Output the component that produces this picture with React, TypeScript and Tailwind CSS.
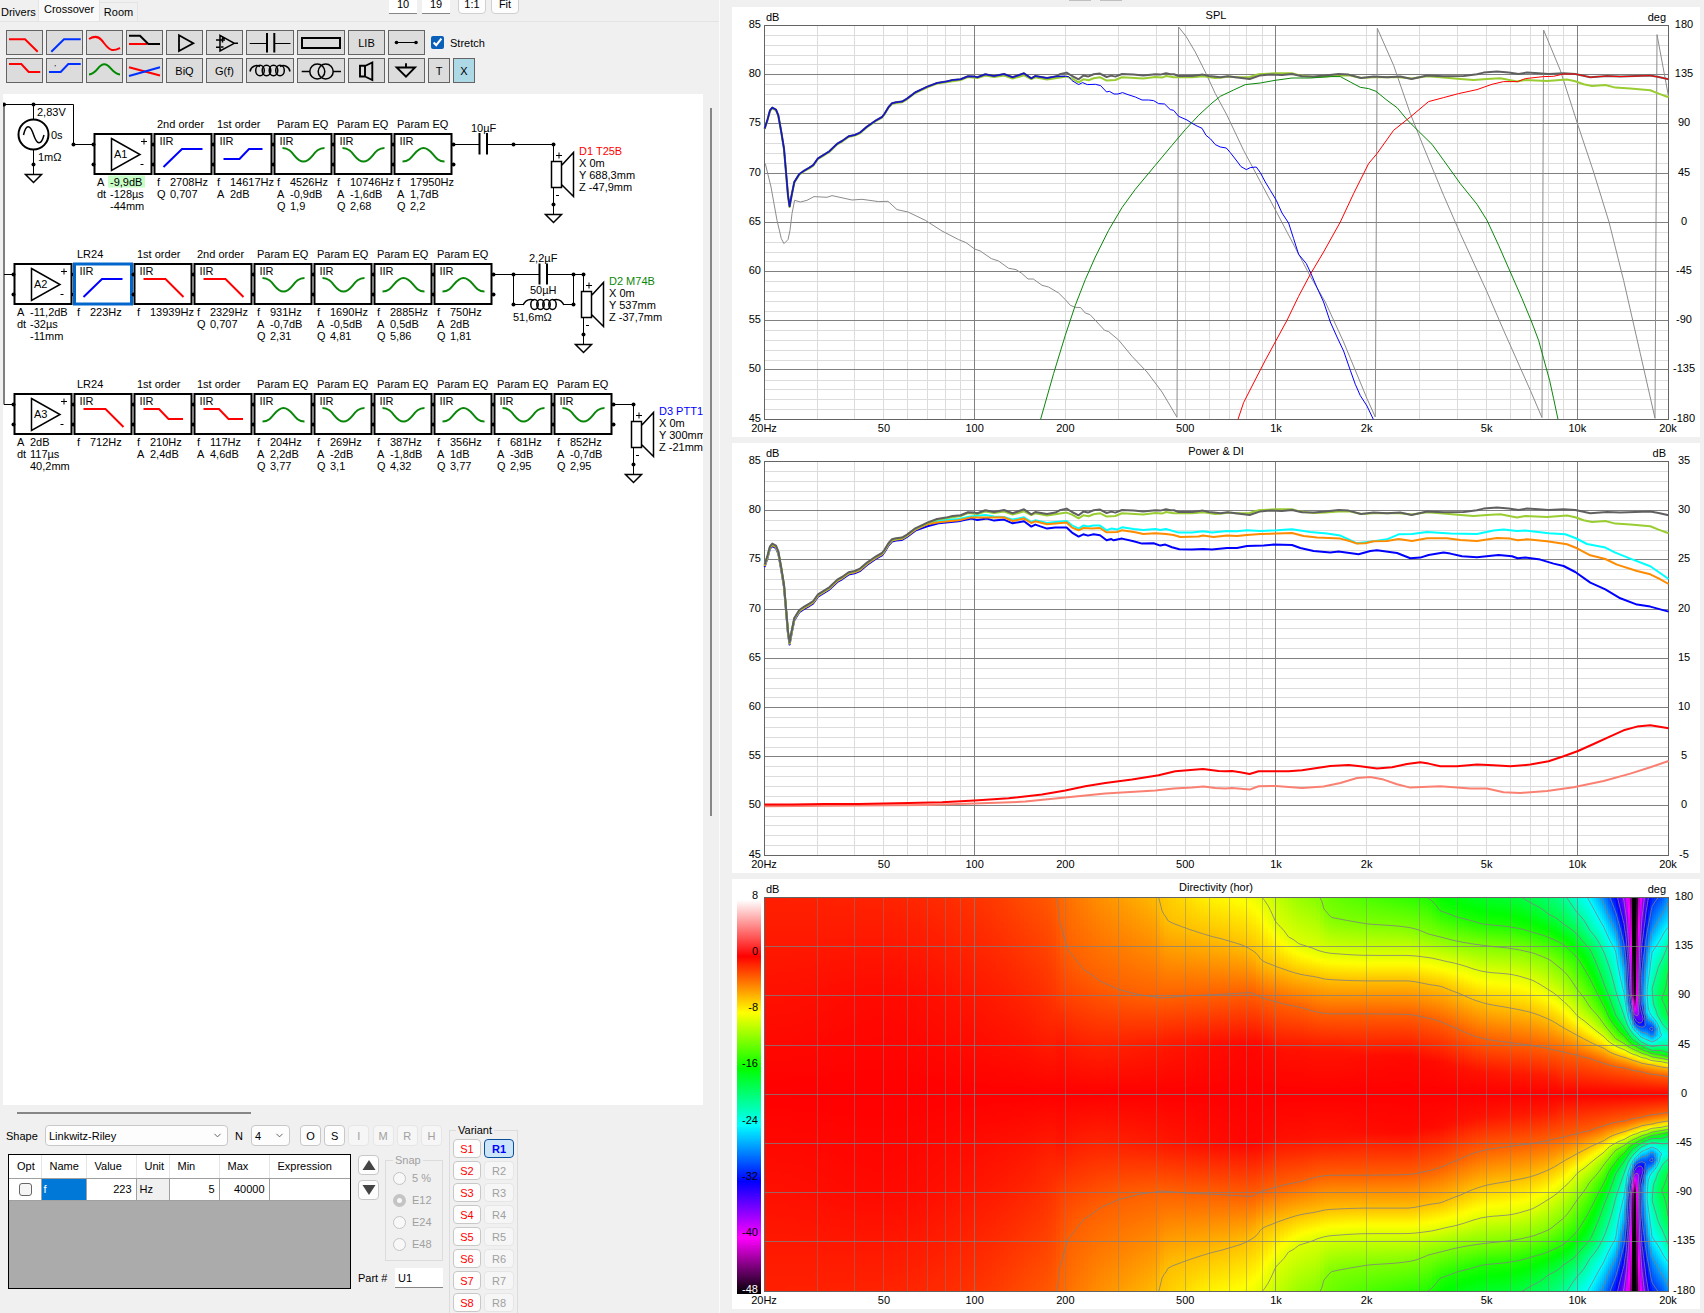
import { useState } from 'react';
import type { ReactNode } from 'react';
import clsx from 'clsx';
import { ChevronDown } from 'lucide-react';

type Point = [number, number];

/* ------------------------------------------------------------------ */
/* Toolbar                                                             */
/* ------------------------------------------------------------------ */

interface Tool {
  label: string;
  wide?: boolean;
  icon?: ReactNode;
}

const TOOLS_TOP: Tool[] = [
  { label: 'Low pass', icon: <path d="M2 8.3H18L30.7 20.7" stroke="#f00" /> },
  { label: 'High pass', icon: <path d="M4.3 20.7L17 8.3H33.7" stroke="#0030ff" /> },
  { label: 'Low pass Q', icon: <path d="M2 8C6 5.5 11 5 14.5 9S21 18.5 25 19S31 18 33 17" stroke="#f00" /> },
  {
    label: 'Shelf pair',
    icon: (
      <>
        <path d="M2 13H20" stroke="#f00" />
        <path d="M2 4.7H13L21.3 13H33" stroke="#000" />
      </>
    ),
  },
  { label: 'Amplifier', icon: <path d="M12 4.3L26.3 12.3L12 20Z" stroke="#000" strokeWidth={1.8} /> },
  {
    label: 'Op amp',
    icon: (
      <path
        d="M13 4.3L27.3 12.3L13 20ZM9 9H13M9 16.3H13M27 12.3H31M13 9H18M15.5 6.5V11.5M14 16H16.5"
        stroke="#000"
        strokeWidth={1.5}
      />
    ),
  },
  {
    label: 'Capacitor',
    wide: true,
    icon: (
      <>
        <path d="M2.7 12.5H20M27 12.5H43.5" stroke="#000" strokeWidth={1} />
        <path d="M20 2V21.5M27.3 2V21.5" stroke="#000" />
      </>
    ),
  },
  { label: 'Resistor', wide: true, icon: <rect x={4} y={7} width={38} height={10} stroke="#000" /> },
  { label: 'LIB' },
  {
    label: 'Wire',
    icon: (
      <>
        <path d="M7 11.5H27" stroke="#000" strokeWidth={1} />
        <circle cx={7.5} cy={11.5} r={1.8} fill="#000" />
        <circle cx={27} cy={11.5} r={1.8} fill="#000" />
      </>
    ),
  },
];

const TOOLS_BOTTOM: Tool[] = [
  { label: 'Low shelf', icon: <path d="M2 5H14.3L21.7 13H33.3" stroke="#f00" /> },
  {
    label: 'High shelf',
    icon: (
      <>
        <path d="M2 13H13.7L21.3 5H33.7" stroke="#0030ff" />
        <circle cx={8.3} cy={6.7} r={0.8} fill="#555" />
      </>
    ),
  },
  { label: 'Parametric EQ', icon: <path d="M2 15.5C10 15 11 5.3 17.3 5.3S25 15 33 15.5" stroke="#008a00" /> },
  {
    label: 'Crossing',
    icon: (
      <>
        <path d="M2 8.3L33 16.5" stroke="#f00" />
        <path d="M2 17L33 8.3" stroke="#0030ff" />
      </>
    ),
  },
  { label: 'BiQ' },
  { label: 'G(f)' },
  {
    label: 'Inductor',
    wide: true,
    icon: (
      <g stroke="#000" strokeWidth={1.5}>
        {[13, 19.5, 26.5, 33].map((x) => (
          <ellipse key={x} cx={x} cy={11.5} rx={4.3} ry={5.2} />
        ))}
        <path d="M3 12.5C4 7 9 5.5 13 7.5M43 12.5C42 7 37 5.5 33 7.5" />
      </g>
    ),
  },
  {
    label: 'Transformer',
    wide: true,
    icon: (
      <g stroke="#000" strokeWidth={1.5}>
        <circle cx={19.3} cy={12.5} r={7.5} />
        <circle cx={27.7} cy={12.5} r={7.5} />
        <path d="M3.7 12.5H12M35 12.5H43" />
      </g>
    ),
  },
  { label: 'Speaker', icon: <path d="M11 6.7H16V17.5H11ZM16 7L23.3 3.5V21L16 17.5" stroke="#000" strokeWidth={1.9} /> },
  { label: 'Ground', icon: <path d="M7.7 8.5H26L17 17.7ZM17 4.3V8" stroke="#000" strokeWidth={1.9} /> },
];

function ToolRow({ tools }: { tools: Tool[] }) {
  return (
    <div className="flex gap-[3px]">
      {tools.map((tool) => (
        <button
          key={tool.label}
          type="button"
          aria-label={tool.label}
          className={clsx(
            'flex h-[25px] items-center justify-center border border-[#646464] bg-[#dcdcdc]',
            tool.wide ? 'w-[48px]' : 'w-[37px]',
          )}
        >
          {tool.icon ? (
            <svg
              viewBox={tool.wide ? '0 0 46 23' : '0 0 35 23'}
              className={clsx('h-[23px] shrink-0', tool.wide ? 'w-[46px]' : 'w-[35px]')}
              fill="none"
              strokeWidth={2}
            >
              {tool.icon}
            </svg>
          ) : (
            tool.label
          )}
        </button>
      ))}
    </div>
  );
}

function Header() {
  const [stretch, setStretch] = useState(true);

  return (
    <header className="h-[94px]">
      <div className="flex h-[22px] border-b border-[#e4e4e4]">
        <nav className="flex items-end">
          <button type="button" className="h-[19px] w-[38px] pl-px text-left">Drivers</button>
          <button type="button" className="h-[21px] w-[62px] border-x border-[#e4e4e4] bg-[#f9f9f9] pb-1">
            Crossover
          </button>
          <button type="button" className="h-[19px] w-[38px] border-t border-r border-[#e4e4e4]">Room</button>
        </nav>
        <div className="ml-[251px] flex h-[14px] items-end">
          <input
            aria-label="Width"
            defaultValue="10"
            className="h-[20px] w-[28px] border-b border-[#868686] bg-white text-center"
          />
          <input
            aria-label="Height"
            defaultValue="19"
            className="ml-[5px] h-[20px] w-[28px] border-b border-[#868686] bg-white text-center"
          />
          <button type="button" className="ml-2 h-[20px] w-[28px] rounded border border-[#d0d0d0] bg-[#fdfdfd]">
            1:1
          </button>
          <button type="button" className="ml-[5px] h-[20px] w-[28px] rounded border border-[#d0d0d0] bg-[#fdfdfd]">
            Fit
          </button>
        </div>
      </div>

      <div className="flex flex-col gap-[3px] pt-2 pl-[6px]">
        <div className="flex items-center">
          <ToolRow tools={TOOLS_TOP} />
          <label className="ml-[6px] flex items-center gap-[6px]">
            <input
              type="checkbox"
              checked={stretch}
              onChange={(e) => setStretch(e.target.checked)}
              className="h-[13px] w-[13px] accent-[#0a5fb8]"
            />
            Stretch
          </label>
        </div>
        <div className="flex items-center gap-[3px]">
          <ToolRow tools={TOOLS_BOTTOM} />
          <button type="button" className="h-[25px] w-[22px] border border-[#646464] bg-[#dcdcdc]">T</button>
          <button type="button" className="h-[25px] w-[22px] border border-[#646464] bg-[#add8e6]">X</button>
        </div>
      </div>
    </header>
  );
}

/* ------------------------------------------------------------------ */
/* Schematic                                                           */
/* ------------------------------------------------------------------ */

const SHAPES = {
  highpass: { d: 'M10 22.5L28.5 4.5H49', stroke: '#00f' },
  highshelf: { d: 'M10 14.5H26L35.5 4.5H49', stroke: '#00f' },
  lowpass: { d: 'M10 4.5H32L50 22.5', stroke: '#f00' },
  lowshelf: { d: 'M10 4.5H25.5L35 14.5H49.5', stroke: '#f00' },
  dip: { d: 'M9 3.5C20 3.5 21 17 30 17S40 3.5 51 3.5', stroke: '#0a870a' },
  bump: { d: 'M9 17C20 17 21 3.5 30 3.5S40 17 51 17', stroke: '#0a870a' },
};

interface Block {
  title: string;
  shape: keyof typeof SHAPES;
  params: string[][];
  selected?: boolean;
}

interface Way {
  amp: string;
  ampParams: string[][];
  x: number;
  y: number;
  blocks: Block[];
}

const EQ = 'Param EQ';

const WAYS: Way[] = [
  {
    amp: 'A1',
    ampParams: [['A', '-9,9dB'], ['dt', '-128µs'], ['', '-44mm']],
    x: 93.5,
    y: 144.5,
    blocks: [
      { title: '2nd order', shape: 'highpass', params: [['f', '2708Hz'], ['Q', '0,707']] },
      { title: '1st order', shape: 'highshelf', params: [['f', '14617Hz'], ['A', '2dB']] },
      { title: EQ, shape: 'dip', params: [['f', '4526Hz'], ['A', '-0,9dB'], ['Q', '1,9']] },
      { title: EQ, shape: 'dip', params: [['f', '10746Hz'], ['A', '-1,6dB'], ['Q', '2,68']] },
      { title: EQ, shape: 'bump', params: [['f', '17950Hz'], ['A', '1,7dB'], ['Q', '2,2']] },
    ],
  },
  {
    amp: 'A2',
    ampParams: [['A', '-11,2dB'], ['dt', '-32µs'], ['', '-11mm']],
    x: 13.5,
    y: 274.5,
    blocks: [
      { title: 'LR24', shape: 'highpass', params: [['f', '223Hz']], selected: true },
      { title: '1st order', shape: 'lowpass', params: [['f', '13939Hz']] },
      { title: '2nd order', shape: 'lowpass', params: [['f', '2329Hz'], ['Q', '0,707']] },
      { title: EQ, shape: 'dip', params: [['f', '931Hz'], ['A', '-0,7dB'], ['Q', '2,31']] },
      { title: EQ, shape: 'dip', params: [['f', '1690Hz'], ['A', '-0,5dB'], ['Q', '4,81']] },
      { title: EQ, shape: 'bump', params: [['f', '2885Hz'], ['A', '0,5dB'], ['Q', '5,86']] },
      { title: EQ, shape: 'bump', params: [['f', '750Hz'], ['A', '2dB'], ['Q', '1,81']] },
    ],
  },
  {
    amp: 'A3',
    ampParams: [['A', '2dB'], ['dt', '117µs'], ['', '40,2mm']],
    x: 13.5,
    y: 404.5,
    blocks: [
      { title: 'LR24', shape: 'lowpass', params: [['f', '712Hz']] },
      { title: '1st order', shape: 'lowshelf', params: [['f', '210Hz'], ['A', '2,4dB']] },
      { title: '1st order', shape: 'lowshelf', params: [['f', '117Hz'], ['A', '4,6dB']] },
      { title: EQ, shape: 'bump', params: [['f', '204Hz'], ['A', '2,2dB'], ['Q', '3,77']] },
      { title: EQ, shape: 'dip', params: [['f', '269Hz'], ['A', '-2dB'], ['Q', '3,1']] },
      { title: EQ, shape: 'dip', params: [['f', '387Hz'], ['A', '-1,8dB'], ['Q', '4,32']] },
      { title: EQ, shape: 'bump', params: [['f', '356Hz'], ['A', '1dB'], ['Q', '3,77']] },
      { title: EQ, shape: 'dip', params: [['f', '681Hz'], ['A', '-3dB'], ['Q', '2,95']] },
      { title: EQ, shape: 'dip', params: [['f', '852Hz'], ['A', '-0,7dB'], ['Q', '2,95']] },
    ],
  },
];

const DRIVERS = [
  { name: 'D1 T25B', color: '#f00', x: 553.5, y: 144.5, pos: ['X 0m', 'Y 688,3mm', 'Z -47,9mm'] },
  { name: 'D2 M74B', color: '#0a870a', x: 583.5, y: 274.5, pos: ['X 0m', 'Y 537mm', 'Z -37,7mm'] },
  { name: 'D3 PTT1', color: '#00f', x: 633.5, y: 404.5, pos: ['X 0m', 'Y 300mm', 'Z -21mm'] },
];

const DOTS: Point[] = [
  [4, 104.5], [33.5, 104.5], [73.5, 144.5], [33.5, 164.5], [513.5, 144.5],
  [513.5, 274.5], [573.5, 274.5], [513.5, 304.5], [573.5, 304.5],
];

function Params({ x, y, rows }: { x: number; y: number; rows: string[][] }) {
  return (
    <>
      {rows.map(([key, value], i) => (
        <g key={i}>
          <text x={x + 3.5} y={y + 41.5 + i * 12}>{key}</text>
          <text x={x + 16.5} y={y + 41.5 + i * 12}>{value}</text>
        </g>
      ))}
    </>
  );
}

function Pins({ x, y }: { x: number; y: number }) {
  return (
    <>
      <circle cx={x} cy={y} r={2} />
      <circle cx={x} cy={y + 20} r={2} />
    </>
  );
}

function WayRow({ way }: { way: Way }) {
  const { x, y } = way;
  return (
    <g>
      <rect x={x + 1} y={y - 10.5} width={57} height={40} fill="none" stroke="#000" strokeWidth={2} />
      <path d={`M${x + 18} ${y - 6}L${x + 46.5} ${y + 10}L${x + 18} ${y + 26}Z`} fill="none" stroke="#000" strokeWidth={1.5} />
      <text x={x + 20.5} y={y + 13.5}>{way.amp}</text>
      <path d={`M${x + 47.5} ${y - 3}h6M${x + 50.5} ${y - 6}v6M${x + 47} ${y + 20}h3`} stroke="#000" />
      {way.amp === 'A1' && <rect x={x + 14.5} y={y + 31} width={37} height={12} fill="#c6ffc6" />}
      <Params x={x} y={y} rows={way.ampParams} />
      <Pins x={x} y={y} />
      {way.blocks.map((block, i) => {
        const bx = x + 60 * (i + 1);
        const shape = SHAPES[block.shape];
        return (
          <g key={i}>
            <Pins x={bx} y={y} />
            <rect
              x={bx + 1}
              y={y - 10.5}
              width={57}
              height={40}
              fill="#fff"
              stroke={block.selected ? '#0066cc' : '#000'}
              strokeWidth={block.selected ? 3 : 2}
            />
            <text x={bx + 3.5} y={y - 16.5}>{block.title}</text>
            <text x={bx + 6} y={y + 0.5}>IIR</text>
            <path d={shape.d} transform={`translate(${bx} ${y})`} fill="none" stroke={shape.stroke} strokeWidth={2} />
            <Params x={bx} y={y} rows={block.params} />
          </g>
        );
      })}
      <Pins x={x + 60 * (way.blocks.length + 1)} y={y} />
    </g>
  );
}

function Ground({ x, y }: { x: number; y: number }) {
  return <path d={`M${x - 8} ${y}h16l-8 8z`} fill="none" stroke="#000" strokeWidth={1.5} />;
}

function Schematic() {
  return (
    <svg viewBox="3 94 700 400" className="h-[400px] w-[700px]" fontSize={11}>
      {/* wires */}
      <path
        d="M4 404.5V104.5H73.5V144.5H93.5M4 274.5H13.5M4 404.5H13.5
           M33.5 104.5V119M33.5 150V174.5
           M453.5 144.5H479M487 144.5H553.5
           M493.5 274.5H539M547 274.5H583.5
           M513.5 274.5V304.5H524M573.5 274.5V304.5H563
           M613.5 404.5H633.5"
        fill="none"
        stroke="#000"
      />
      {DOTS.map(([x, y]) => (
        <circle key={`${x}-${y}`} cx={x} cy={y} r={2} />
      ))}

      {/* source */}
      <circle cx={33.5} cy={134.5} r={15} fill="none" stroke="#000" strokeWidth={2} />
      <path d="M23.5 135C26 124 30 124 33.5 134.5S41 146 44 135" fill="none" stroke="#000" strokeWidth={1.5} />
      <Ground x={33.5} y={174.5} />
      <text x={37} y={116}>2,83V</text>
      <text x={51} y={139}>0s</text>
      <text x={38} y={161}>1mΩ</text>

      {WAYS.map((way) => (
        <WayRow key={way.amp} way={way} />
      ))}

      {/* passive parts */}
      <path d="M479.5 133V154.5M487 133V154.5M539.5 263.5V284.5M547 263.5V284.5" stroke="#000" strokeWidth={2} />
      <text x={471} y={132}>10µF</text>
      <text x={529} y={262}>2,2µF</text>
      <text x={530} y={294}>50µH</text>
      <text x={513} y={321}>51,6mΩ</text>
      <g fill="none" stroke="#000" strokeWidth={1.5}>
        {[534.5, 540.5, 546.5, 552.5].map((x) => (
          <ellipse key={x} cx={x} cy={304.5} rx={3.7} ry={5} />
        ))}
        <path d="M523 305C526 299 531 299 534 300M564 305C561 299 556 299 553 300" />
      </g>

      {/* drivers */}
      {DRIVERS.map(({ name, color, x, y, pos }) => (
        <g key={name}>
          <path d={`M${x} ${y}v17M${x} ${y + 43}v27`} stroke="#000" />
          <circle cx={x} cy={y} r={2} />
          <circle cx={x} cy={y + 60} r={2} />
          <path
            d={`M${x - 2} ${y + 17}h10v26h-10zM${x + 8} ${y + 21}l12 -13v44l-12 -12`}
            fill="#fff"
            stroke="#000"
            strokeWidth={1.5}
          />
          <path d={`M${x + 2.5} ${y + 11}h6M${x + 5.5} ${y + 8}v6M${x + 2.5} ${y + 51}h3`} stroke="#000" />
          <Ground x={x} y={y + 70} />
          <text x={x + 25.5} y={y + 10.5} fill={color}>{name}</text>
          {pos.map((line, i) => (
            <text key={line} x={x + 25.5} y={y + 22.5 + i * 12}>{line}</text>
          ))}
        </g>
      ))}
    </svg>
  );
}

/* ------------------------------------------------------------------ */
/* Part editor                                                         */
/* ------------------------------------------------------------------ */

const COLUMNS = [
  { name: 'Opt', width: 'w-[32px]' },
  { name: 'Name', width: 'w-[45px]' },
  { name: 'Value', width: 'w-[50px]' },
  { name: 'Unit', width: 'w-[33px]' },
  { name: 'Min', width: 'w-[50px]' },
  { name: 'Max', width: 'w-[50px]' },
  { name: 'Expression', width: 'w-[81px]' },
];

const MODES = [
  { name: 'O', enabled: true },
  { name: 'S', enabled: true },
  { name: 'I', enabled: false },
  { name: 'M', enabled: false },
  { name: 'R', enabled: false },
  { name: 'H', enabled: false },
];

const SNAPS = ['5 %', 'E12', 'E24', 'E48'];
const VARIANTS = [1, 2, 3, 4, 5, 6, 7, 8];

function SelectBox({ id, value, width }: { id: string; value: string; width: string }) {
  return (
    <div className={clsx('flex h-[21px] items-center rounded-sm border border-[#c8c8c8] bg-[#fdfdfd] pr-1', width)}>
      <select id={id} defaultValue={value} className="min-w-0 flex-1 appearance-none bg-transparent pl-[3px] outline-none">
        <option>{value}</option>
      </select>
      <ChevronDown className="h-[11px] w-[11px] text-[#555]" strokeWidth={2} />
    </div>
  );
}

function ParamTable() {
  return (
    <div className="mt-px h-[135px] w-[343px] border border-black bg-[#ababab]">
      <table className="w-[341px] table-fixed border-collapse">
        <thead>
          <tr className="h-[23px] bg-white">
            {COLUMNS.map((col) => (
              <th
                key={col.name}
                className={clsx(
                  'border-r border-b border-r-[#e5e5e5] border-b-[#a0a0a0] p-0 pl-2 text-left font-normal last:border-r-0',
                  col.width,
                )}
              >
                {col.name}
              </th>
            ))}
          </tr>
        </thead>
        <tbody>
          <tr className="h-[22px] bg-white">
            <td className="border-r border-b border-[#a0a0a0] p-0">
              <input
                type="checkbox"
                aria-label="Optimize f"
                className="ml-[10px] block h-[13px] w-[13px] appearance-none rounded-[3px] border border-[#666] bg-[#f5f5f5] checked:bg-[#0a5fb8]"
              />
            </td>
            <td className="border-r border-b border-[#a0a0a0] bg-[#0078d7] p-0 pl-[2px] text-white">f</td>
            <td className="border-r border-b border-[#a0a0a0] p-0 pr-1 text-right">223</td>
            <td className="border-r border-b border-[#a0a0a0] bg-[#f0f0f0] p-0 pl-[3px]">Hz</td>
            <td className="border-r border-b border-[#a0a0a0] p-0 pr-1 text-right">5</td>
            <td className="border-r border-b border-[#a0a0a0] p-0 pr-1 text-right">40000</td>
            <td className="border-b border-[#a0a0a0] p-0" />
          </tr>
        </tbody>
      </table>
    </div>
  );
}

function PartEditor() {
  const [snap, setSnap] = useState('E12');
  const [variant, setVariant] = useState(1);

  return (
    <section className="h-[208px] overflow-hidden pt-[7px]">
      <div className="ml-[17px] h-[2px] w-[234px] bg-[#868686]" />
      <div className="flex pl-[6px]">
        <div className="w-[443px] pt-[11px]">
          <div className="flex items-center">
            <label htmlFor="shape" className="w-[39px]">Shape</label>
            <SelectBox id="shape" value="Linkwitz-Riley" width="w-[183px]" />
            <label htmlFor="order" className="w-[23px] pl-[7px]">N</label>
            <SelectBox id="order" value="4" width="w-[39px]" />
            <div className="ml-[10px] flex w-[142px] justify-between">
              {MODES.map((mode) => (
                <button
                  key={mode.name}
                  type="button"
                  disabled={!mode.enabled}
                  className="h-[21px] w-[21px] rounded border border-[#c8c8c8] bg-[#fdfdfd] disabled:border-[#e6e6e6] disabled:bg-[#f6f6f6] disabled:text-[#a0a0a0]"
                >
                  {mode.name}
                </button>
              ))}
            </div>
          </div>

          <div className="mt-[7px] flex pl-[2px]">
            <ParamTable />
            <div className="ml-[7px] w-[85px]">
              <div className="flex gap-[6px]">
                <div className="flex flex-col gap-[5px] pt-[2px]">
                  <button
                    type="button"
                    aria-label="Move up"
                    className="flex h-[20px] w-[21px] items-center justify-center rounded border border-[#c8c8c8] bg-[#fdfdfd]"
                  >
                    <svg viewBox="0 0 14 12" className="h-[12px] w-[14px]"><path d="M7 1L13.5 11H.5Z" fill="#444" /></svg>
                  </button>
                  <button
                    type="button"
                    aria-label="Move down"
                    className="flex h-[20px] w-[21px] items-center justify-center rounded border border-[#c8c8c8] bg-[#fdfdfd]"
                  >
                    <svg viewBox="0 0 14 12" className="h-[12px] w-[14px]"><path d="M7 11L.5 1H13.5Z" fill="#444" /></svg>
                  </button>
                </div>
                <fieldset disabled className="w-[58px] border border-[#dcdcdc] pb-[5px] pl-[7px] text-[#a0a0a0]">
                  <legend className="px-[2px] leading-[14px]">Snap</legend>
                  {SNAPS.map((s) => (
                    <label key={s} className="flex h-[22px] items-center gap-[6px]">
                      <input
                        type="radio"
                        name="snap"
                        checked={snap === s}
                        onChange={() => setSnap(s)}
                        className="h-[13px] w-[13px] appearance-none rounded-full border border-[#c4c4c4] bg-[#f8f8f8] checked:border-4"
                      />
                      {s}
                    </label>
                  ))}
                </fieldset>
              </div>
              <div className="mt-[7px] flex items-center">
                <label htmlFor="part" className="w-[37px]">Part #</label>
                <input id="part" defaultValue="U1" className="h-[20px] w-[48px] border-b border-[#868686] bg-white px-[3px]" />
              </div>
            </div>
          </div>
        </div>

        <div className="pt-[9px]">
          <fieldset className="h-[200px] w-[69px] border border-[#dcdcdc] pt-[2px] pl-[3px]">
            <legend className="ml-[3px] px-[2px] leading-[14px]">Variant</legend>
            <div className="flex flex-col gap-[3px]">
              {VARIANTS.map((n) => (
                <div key={n} className="flex gap-[3px]">
                  <button type="button" className="h-[19px] w-[28px] rounded border border-[#c8c8c8] bg-[#fdfdfd] text-[#f00]">
                    S{n}
                  </button>
                  <button
                    type="button"
                    disabled={n !== 1}
                    onClick={() => setVariant(n)}
                    className={clsx(
                      'h-[19px] w-[30px] rounded border',
                      variant === n
                        ? 'border-[#0a4f9c] bg-[#cce4f7] font-bold text-[#00f]'
                        : 'border-[#e6e6e6] bg-[#f6f6f6] text-[#a0a0a0]',
                    )}
                  >
                    R{n}
                  </button>
                </div>
              ))}
            </div>
          </fieldset>
        </div>
      </div>
    </section>
  );
}

/* ------------------------------------------------------------------ */
/* Graph frame                                                         */
/* ------------------------------------------------------------------ */

const PLOT = { left: 32, top: 18.5, width: 904, height: 394 };
const RIGHT = PLOT.left + PLOT.width;
const BOTTOM = PLOT.top + PLOT.height;

const freqX = (hz: number) => PLOT.left + (PLOT.width * Math.log10(hz / 20)) / 3;
const crisp = (v: number) => Math.floor(v) + 0.5;

const MINOR_HZ = [
  30, 40, 50, 60, 70, 80, 90, 200, 300, 400, 500, 600, 700, 800, 900,
  2000, 3000, 4000, 5000, 6000, 7000, 8000, 9000,
];
const MAJOR_HZ = [100, 1000, 10000];
const X_TICKS: [number, string][] = [
  [20, '20Hz'], [50, '50'], [100, '100'], [200, '200'], [500, '500'],
  [1000, '1k'], [2000, '2k'], [5000, '5k'], [10000, '10k'], [20000, '20k'],
];

const DB_TICKS = [85, 80, 75, 70, 65, 60, 55, 50, 45];
const DEG_TICKS = [180, 135, 90, 45, 0, -45, -90, -135, -180];
const DI_TICKS = [35, 30, 25, 20, 15, 10, 5, 0, -5];

interface GraphProps {
  title: string;
  rightUnit: string;
  leftTicks?: number[];
  rightTicks: number[];
  overlay?: boolean;
  before?: ReactNode;
  children?: ReactNode;
}

function Graph({ title, rightUnit, leftTicks, rightTicks, overlay, before, children }: GraphProps) {
  const rows = Array.from({ length: 41 }, (_, i) => i);
  const minor = overlay ? 'rgba(128,128,128,.45)' : '#dcdcdc';
  const major = overlay ? 'rgba(128,128,128,.75)' : '#808080';

  return (
    <svg viewBox="0 0 968 430" className="block w-full bg-white" fontSize={11} role="img" aria-label={title}>
      {before}
      {rows
        .filter((i) => i % 5 !== 0 && !overlay)
        .map((i) => {
          const y = crisp(PLOT.top + (i * PLOT.height) / 40);
          return <path key={i} d={`M${PLOT.left} ${y}H${RIGHT}`} stroke={minor} />;
        })}
      {MINOR_HZ.map((hz) => (
        <path key={hz} d={`M${crisp(freqX(hz))} ${PLOT.top}V${BOTTOM}`} stroke={minor} />
      ))}
      {MAJOR_HZ.map((hz) => (
        <path key={hz} d={`M${crisp(freqX(hz))} ${PLOT.top}V${BOTTOM}`} stroke={major} />
      ))}
      {rightTicks.map((tick, i) => {
        const y = crisp(PLOT.top + (i * (PLOT.height - 0.5)) / 8);
        return (
          <g key={tick}>
            <path d={`M${PLOT.left} ${y}H${RIGHT}`} stroke={major} />
            {leftTicks && <text x={29} y={y + 2} textAnchor="end">{leftTicks[i]}</text>}
            <text x={952} y={y + 2} textAnchor="middle">{tick}</text>
          </g>
        );
      })}
      <rect x={32.5} y={18.5} width={904} height={394} fill="none" stroke="#646464" />
      {children}
      {X_TICKS.map(([hz, label]) => (
        <text key={hz} x={freqX(hz)} y={425} textAnchor="middle">{label}</text>
      ))}
      <text x={34} y={14}>dB</text>
      <text x={484} y={12} textAnchor="middle">{title}</text>
      <text x={934} y={14} textAnchor="end">{rightUnit}</text>
    </svg>
  );
}

/* ------------------------------------------------------------------ */
/* Traces: stored in thirds of a pixel, low band and high band apart   */
/* ------------------------------------------------------------------ */

const HIGH_BAND = 1455;

const shift = (pts: Point[], dx: number, dy: number): Point[] => pts.map(([x, y]) => [x + dx, y + dy]);
const join = (low: Point[], high: Point[]): Point[] => [...low, ...shift(high, HIGH_BAND, 0)];

function Trace({ pts, color, width = 1 }: { pts: Point[]; color: string; width?: number }) {
  const points = pts.map(([x, y]) => `${(x / 3 - 6.7).toFixed(1)},${(y / 3 - 6.7).toFixed(1)}`).join(' ');
  return <polyline points={points} fill="none" stroke={color} strokeWidth={width} strokeLinejoin="round" />;
}

const BASS: Point[] = [
  [118, 385], [127, 357], [134, 330], [141, 322], [152, 328], [159, 345], [168, 395], [176, 445], [183, 525],
  [188, 585], [193, 618], [199, 585], [207, 545], [222, 521], [238, 510], [252, 502], [264, 494], [278, 474],
  [296, 463], [312, 453], [336, 430], [350, 422], [370, 408], [388, 404], [404, 397], [425, 379], [452, 360],
  [470, 350], [478, 340], [490, 320], [500, 309], [512, 306], [530, 304], [545, 295], [570, 276],
];
const UPPER_BASS: Point[] = [
  [606, 259], [635, 248], [662, 244], [682, 239], [706, 237], [728, 228], [748, 229], [756, 231], [780, 222],
  [806, 227], [836, 221], [862, 231], [896, 219], [918, 234], [930, 227], [965, 233], [990, 229],
];

const ON_AXIS = join(
  [
    ...BASS, ...UPPER_BASS,
    [1003, 222], [1024, 217], [1040, 227], [1060, 237], [1074, 226], [1088, 229], [1105, 222], [1124, 220],
    [1144, 230], [1158, 226], [1170, 229], [1190, 221], [1225, 223], [1254, 226], [1290, 222], [1305, 223],
    [1322, 219], [1335, 222], [1346, 222], [1360, 227], [1400, 227], [1433, 223], [1450, 227], [1466, 229],
    [1485, 231],
  ],
  [
    [52, 228], [76, 231], [118, 236], [148, 226], [180, 223], [215, 224], [245, 221], [275, 228], [310, 229],
    [345, 226], [385, 221], [415, 223], [452, 233], [490, 229], [530, 231], [570, 229], [604, 236], [650, 226],
    [700, 228], [760, 227], [800, 222], [820, 217], [860, 214], [895, 217], [925, 221], [950, 217], [985, 219],
    [1015, 221], [1060, 219], [1095, 221], [1140, 231], [1190, 227], [1230, 229], [1320, 226], [1345, 230],
    [1375, 237],
  ],
);

const LISTENING = join(
  [
    ...shift(BASS, 0, 2),
    [606, 261], [635, 250], [662, 246], [706, 239], [728, 230], [756, 233], [780, 226], [806, 230], [836, 226],
    [862, 235], [896, 225], [918, 236], [930, 231], [965, 238], [990, 234], [1024, 229], [1040, 235], [1060, 246],
    [1074, 237], [1090, 240], [1105, 234], [1125, 231], [1144, 241], [1170, 239], [1190, 231], [1254, 235],
    [1290, 230], [1310, 232], [1322, 227], [1345, 231], [1400, 231], [1435, 228], [1470, 233], [1490, 232],
  ],
  [
    [55, 229], [76, 231], [118, 230], [145, 222], [195, 219], [245, 219], [270, 226], [310, 230], [345, 229],
    [385, 226], [420, 226], [452, 233], [490, 231], [560, 230], [604, 235], [650, 228], [700, 232], [750, 236],
    [790, 239], [830, 236], [870, 234], [920, 244], [945, 239], [1010, 242], [1070, 238], [1095, 243],
    [1120, 252], [1145, 257], [1185, 254], [1215, 262], [1260, 265], [1320, 270], [1345, 280], [1375, 291],
  ],
);

const WOOFER_LOW: Point[] = [...BASS, ...UPPER_BASS, [1020, 228]];
const WOOFER = join(
  [
    [1020, 228], [1030, 229], [1040, 241], [1060, 253], [1072, 247], [1086, 253], [1110, 252], [1126, 256],
    [1144, 275], [1152, 273], [1166, 281], [1178, 281], [1192, 277], [1205, 282], [1230, 290], [1250, 299],
    [1270, 299], [1285, 301], [1300, 310], [1318, 311], [1335, 328], [1345, 330], [1360, 348], [1385, 359],
    [1400, 369], [1415, 377], [1430, 384], [1442, 405], [1456, 416], [1470, 433], [1485, 440],
  ],
  [
    [48, 443], [60, 457], [75, 476], [92, 499], [108, 508], [120, 502], [138, 500], [150, 517], [165, 545],
    [180, 570], [198, 600], [215, 638], [235, 668], [250, 715], [265, 762], [288, 790], [302, 820], [320, 862],
    [340, 905], [360, 965], [380, 1010], [400, 1052], [420, 1110], [435, 1152], [450, 1186], [470, 1217],
    [489, 1257],
  ],
);

const MIDRANGE = join(
  [
    [946, 1257], [985, 1120], [1020, 1005], [1050, 915], [1080, 838], [1110, 770], [1150, 690], [1190, 622],
    [1230, 567], [1290, 495], [1340, 435], [1380, 388], [1420, 345], [1460, 308], [1485, 288],
  ],
  [
    [70, 269], [105, 253], [150, 248], [195, 240], [245, 233], [300, 233], [360, 229], [390, 229], [420, 245],
    [450, 261], [475, 265], [497, 273], [530, 300], [560, 322], [590, 358], [625, 393], [665, 432], [700, 480],
    [750, 550], [800, 612], [830, 660], [865, 735], [900, 815], [935, 895], [962, 960], [985, 1020],
    [1000, 1075], [1018, 1140], [1030, 1195], [1043, 1257],
  ],
);

const TWEETER = join(
  [],
  [
    [83, 1257], [100, 1207], [130, 1148], [165, 1080], [196, 1023], [230, 960], [265, 888], [300, 822],
    [340, 755], [390, 665], [430, 580], [475, 490], [500, 460], [550, 390], [600, 350], [655, 304], [700, 292],
    [745, 280], [800, 268], [845, 252], [880, 244], [922, 244], [945, 235], [1000, 229], [1030, 228],
    [1060, 221], [1095, 221], [1140, 231], [1190, 227], [1230, 229], [1320, 226], [1345, 230], [1375, 237],
  ],
);

const PHASE = join(
  [
    [120, 490], [137, 560], [155, 660], [168, 715], [176, 730], [188, 718], [194, 690], [200, 640], [208, 600],
    [225, 605], [245, 600], [266, 589], [305, 591], [320, 586], [380, 599], [410, 597], [460, 604], [488, 603],
    [515, 628], [548, 635], [600, 660], [650, 692], [700, 718], [722, 727], [748, 746], [765, 752], [798, 775],
    [820, 782], [850, 804], [872, 808], [888, 818], [908, 836], [924, 836], [950, 855], [970, 860], [1000, 878],
    [1020, 898], [1035, 915], [1050, 921], [1066, 922], [1080, 938], [1094, 943], [1138, 990], [1150, 994],
    [1180, 1019], [1220, 1068], [1265, 1115], [1310, 1175], [1355, 1251], [1360, 80], [1382, 108], [1410, 155],
    [1440, 215], [1470, 280],
  ],
  [
    [50, 345], [100, 450], [196, 630], [300, 828], [345, 905], [400, 1025], [470, 1195], [495, 1250], [501, 84],
    [550, 195], [600, 340], [640, 440], [700, 585], [750, 700], [829, 872], [880, 990], [960, 1170], [995, 1252],
    [1000, 89], [1050, 210], [1103, 375], [1150, 515], [1196, 665], [1240, 840], [1290, 1060], [1334, 1254],
    [1340, 103], [1375, 290],
  ],
);

const EARLY = join(
  [
    ...shift(BASS, 0, -9),
    [606, 250], [640, 241], [700, 236], [735, 229], [780, 224], [806, 229], [836, 230], [862, 238], [896, 231],
    [918, 245], [930, 240], [965, 248], [990, 245], [1024, 242], [1040, 255], [1060, 265], [1074, 256],
    [1088, 259], [1105, 256], [1124, 256], [1144, 270], [1158, 265], [1175, 268], [1190, 261], [1225, 266],
    [1254, 269], [1290, 266], [1305, 269], [1322, 266], [1360, 277], [1400, 277], [1433, 273], [1460, 277],
  ],
  [
    [50, 272], [80, 273], [110, 270], [150, 272], [200, 270], [245, 267], [300, 275], [350, 280], [390, 286],
    [415, 297], [440, 309], [490, 303], [530, 297], [565, 282], [605, 281], [650, 275], [720, 280], [800, 281],
    [850, 271], [880, 268], [920, 272], [945, 271], [1015, 279], [1065, 282], [1095, 293], [1130, 311],
    [1185, 322], [1215, 337], [1260, 355], [1320, 378], [1345, 395], [1375, 416],
  ],
);

const IN_ROOM = join(
  [
    ...shift(BASS, 0, -8),
    [606, 252], [640, 246], [700, 240], [735, 232], [806, 232], [836, 231], [862, 242], [896, 235], [918, 248],
    [930, 243], [965, 252], [1024, 247], [1040, 262], [1060, 270], [1074, 263], [1100, 265], [1124, 263],
    [1144, 276], [1175, 275], [1190, 270], [1230, 276], [1254, 281], [1290, 279], [1322, 281], [1345, 284],
    [1365, 290], [1420, 289], [1433, 286], [1465, 290],
  ],
  [
    [50, 286], [80, 287], [110, 284], [150, 281], [245, 278], [280, 287], [320, 292], [390, 295], [420, 303],
    [440, 310], [465, 309], [490, 303], [530, 302], [565, 296], [605, 302], [650, 294], [710, 294], [750, 299],
    [800, 302], [860, 293], [900, 295], [922, 300], [950, 297], [1010, 303], [1070, 312], [1100, 324],
    [1140, 345], [1185, 356], [1220, 373], [1280, 392], [1320, 402], [1345, 414], [1375, 431],
  ],
);

const POWER = join(
  [
    ...shift(BASS, 0, -5),
    [606, 258], [640, 249], [700, 243], [738, 235], [756, 239], [785, 235], [806, 241], [836, 238], [862, 249],
    [896, 243], [918, 259], [930, 253], [965, 265], [990, 262], [1024, 262], [1040, 277], [1060, 289],
    [1074, 282], [1088, 286], [1105, 282], [1124, 285], [1144, 300], [1158, 296], [1165, 300], [1190, 295],
    [1225, 303], [1250, 310], [1285, 309], [1305, 316], [1320, 313], [1340, 321], [1362, 327], [1400, 328],
    [1433, 326], [1460, 328],
  ],
  [
    [50, 323], [80, 323], [110, 317], [160, 316], [190, 313], [245, 314], [270, 323], [310, 332], [360, 337],
    [385, 334], [445, 342], [480, 332], [500, 330], [560, 338], [600, 354], [630, 352], [655, 344], [700, 337],
    [720, 340], [755, 348], [800, 351], [865, 344], [905, 348], [922, 354], [945, 352], [990, 358], [1030, 370],
    [1060, 377], [1095, 395], [1140, 427], [1185, 447], [1230, 474], [1280, 493], [1320, 499], [1375, 514],
  ],
);

const POWER_DI = join(
  [
    [118, 1093], [200, 1093], [300, 1091], [400, 1091], [550, 1088], [650, 1086], [748, 1081], [850, 1074],
    [950, 1063], [1020, 1051], [1080, 1038], [1140, 1028], [1220, 1018], [1300, 1005], [1350, 993], [1433, 986],
    [1480, 992],
  ],
  [
    [45, 993], [65, 992], [90, 996], [118, 1001], [145, 993], [235, 993], [275, 990], [320, 983], [360, 977],
    [415, 974], [450, 978], [500, 985], [545, 981], [590, 971], [630, 966], [655, 970], [690, 978], [740, 978],
    [800, 973], [850, 975], [900, 978], [960, 973], [1015, 963], [1060, 948], [1103, 932], [1150, 911],
    [1200, 888], [1240, 870], [1280, 859], [1320, 855], [1375, 864],
  ],
);

const EARLY_DI = join(
  [
    [118, 1098], [400, 1096], [600, 1094], [748, 1090], [900, 1084], [1020, 1072], [1140, 1060], [1290, 1051],
    [1345, 1045], [1400, 1042], [1435, 1039], [1470, 1043],
  ],
  [
    [45, 1045], [65, 1043], [118, 1048], [145, 1038], [196, 1037], [275, 1043], [340, 1039], [390, 1028],
    [440, 1013], [480, 1010], [520, 1018], [560, 1032], [600, 1042], [690, 1038], [780, 1045], [830, 1045],
    [880, 1056], [930, 1058], [1010, 1052], [1090, 1041], [1180, 1022], [1260, 1000], [1320, 981], [1375, 962],
  ],
);

/* ------------------------------------------------------------------ */
/* Directivity map                                                     */
/* ------------------------------------------------------------------ */

// [Hz, [angle, dB][]], symmetric around 0 deg
const POLAR: [number, Point[]][] = [
  [20, [[0, 0], [180, -1]]],
  [50, [[0, 0], [90, -0.3], [180, -1.1]]],
  [100, [[0, 0], [90, -0.7], [180, -1.6]]],
  [150, [[0, 0], [90, -1.2], [180, -2.4]]],
  [184, [[0, 0], [90, -1.7], [180, -2.9]]],
  [190, [[0, 0], [45, -0.6], [90, -1.9], [161, -3], [180, -3.1]]],
  [203, [[0, 0], [45, -0.8], [90, -2.1], [133, -3], [180, -3.5]]],
  [230, [[0, 0], [45, -1], [114, -3], [180, -4]]],
  [262, [[0, 0], [45, -1.1], [103, -3], [180, -4.5]]],
  [300, [[0, 0], [45, -1], [96, -3], [180, -4.9]]],
  [350, [[0, 0], [45, -0.9], [91, -3], [180, -5.4]]],
  [405, [[0, 0], [45, -0.8], [88.5, -3], [180, -5.95]]],
  [415, [[0, 0], [45, -0.8], [88, -3], [168, -6], [180, -6.1]]],
  [440, [[0, 0], [45, -0.7], [88.5, -3], [158, -6], [180, -6.4]]],
  [500, [[0, 0], [45, -0.6], [90, -3], [152, -6], [180, -6.9]]],
  [600, [[0, 0], [45, -0.4], [91, -3], [145, -6], [180, -7.6]]],
  [700, [[0, 0], [45, -0.3], [92, -3], [140, -6], [180, -7.9]]],
  [830, [[0, 0], [45, -0.2], [93, -3], [132, -6], [180, -8.4]]],
  [900, [[0, 0], [45, -0.3], [88.5, -3], [122, -6], [180, -9]]],
  [1000, [[0, 0], [40, -0.4], [85, -3], [117, -6], [157, -9], [180, -9.8]]],
  [1100, [[0, 0], [40, -0.5], [82, -3], [113, -6], [144, -9], [180, -10.6]]],
  [1200, [[0, 0], [40, -0.5], [80, -3], [110, -6], [137, -9], [180, -11.2]]],
  [1390, [[0, 0], [40, -0.6], [75, -3], [107, -6], [131, -9], [180, -11.95]]],
  [1430, [[0, 0], [40, -0.6], [74.5, -3], [106, -6], [130, -9], [170, -12], [180, -12.2]]],
  [1520, [[0, 0], [40, -0.6], [74, -3], [105, -6], [129, -9], [162, -12], [180, -12.6]]],
  [2000, [[0, 0], [35, -0.4], [74, -3], [104, -6], [127, -9], [156, -12], [180, -13.6]]],
  [2700, [[0, 0], [35, -0.3], [73.5, -3], [104, -6], [127, -9], [153, -12], [180, -14.5]]],
  [3250, [[0, 0], [30, -0.3], [69.5, -3], [100.5, -6], [125, -9], [146, -12], [178, -15], [180, -15.1]]],
  [3500, [[0, 0], [30, -0.4], [67, -3], [99, -6], [123, -9], [144, -12], [168, -15], [180, -15.8]]],
  [4000, [[0, 0], [25, -0.5], [60, -3], [93, -6], [119.5, -9], [140, -12], [162, -15], [180, -16.5]]],
  [5000, [[0, 0], [20, -0.6], [50.5, -3], [83, -6], [112, -9], [136, -12], [155, -15], [180, -17.2]]],
  [6000, [[0, 0], [20, -0.8], [47.5, -3], [79, -6], [110, -9], [133.6, -12], [153, -15], [180, -17.6]]],
  [7000, [[0, 0], [18, -0.8], [45, -3], [75, -6], [105, -9], [130, -12], [148.5, -15], [175, -18], [180, -18.4]]],
  [8000, [[0, 0], [16, -0.8], [42, -3], [69, -6], [96, -9], [124, -12], [143.7, -15], [165, -18], [180, -19.3]]],
  [9000, [[0, 0], [39, -3], [61, -6], [85, -9], [113, -12], [137, -15], [155.6, -18], [180, -20.6]]],
  [10000, [[0, 0], [36, -3], [54, -6], [72, -9], [96, -12], [125, -15], [146, -18], [166, -21], [180, -22.7]]],
  [11000, [[0, 0], [33, -3], [48, -6], [63, -9], [80, -12], [106, -15], [133, -18], [150, -21], [176, -24], [180, -24.4]]],
  [12300, [[0, 0], [29, -3], [42, -6], [52.5, -9], [63.5, -12], [80, -15], [100, -18], [129, -21], [152, -24], [173, -27], [180, -28]]],
  [13400, [[0, 0], [26, -3], [36.6, -6], [44.5, -9], [51, -12], [62, -15], [72.6, -18], [95, -21], [132, -24], [150, -27], [167, -30], [180, -32]]],
  [14400, [[0, 0], [24.5, -3], [34, -6], [41, -9], [46, -12], [53, -15], [60, -18], [70, -21], [90, -24], [115, -27], [140, -31], [165, -35], [180, -37]]],
  [15150, [[0, 0], [23, -3], [32, -6], [37.5, -9], [42, -12], [46, -15], [51, -18], [57, -21], [63, -24], [73, -28], [82, -32], [94, -36], [130, -40], [180, -44]]],
  [15450, [[0, 0], [22.5, -3], [31, -6], [36.5, -9], [41, -12], [45, -15], [49, -18], [54, -21], [59, -24], [69, -32], [78, -41], [90, -52], [180, -58]]],
  [15750, [[0, 0], [22, -3], [30.5, -6], [36, -9], [40, -12], [43.6, -15], [47.6, -18], [52, -21], [57, -24], [66, -33], [75, -38], [88, -40], [180, -46]]],
  [16300, [[0, 0], [21, -3], [29, -6], [34, -9], [38, -12], [41.5, -15], [44.5, -18], [48, -21], [52, -24], [60, -29], [69, -36], [85, -29], [110, -30], [140, -34], [180, -39]]],
  [17000, [[0, 0], [20, -3], [28, -6], [33, -9], [36.5, -12], [39.5, -15], [42, -18], [45.5, -21], [50, -24], [56, -27], [62, -30], [75, -25], [94, -24], [124, -27], [155, -31], [180, -34]]],
  [17700, [[0, 0], [19, -3], [27, -6], [31, -9], [34.5, -12], [37.5, -15], [40, -18], [43.6, -21], [48, -24], [54, -28], [60, -31], [71, -24], [82, -21.5], [97, -21], [130, -24], [155, -28], [180, -31]]],
  [19000, [[0, 0], [17.7, -3], [25.6, -6], [30, -9], [33, -12], [36, -15], [40, -18], [45, -21], [54, -24], [62, -22], [73, -19], [88, -18], [115, -20], [143, -24], [164, -27], [180, -29.5]]],
  [20000, [[0, 0], [17, -3], [24.4, -6], [29, -9], [32, -12], [34.5, -15], [38, -18], [47, -22], [54, -23], [62, -20], [72, -18], [88, -17.3], [112, -18], [137, -21], [158, -25], [180, -27.5]]],
];

const RAMP: [number, number[]][] = [
  [8, [255, 255, 255]],
  [0, [255, 0, 0]],
  [-8, [255, 255, 0]],
  [-16, [0, 255, 0]],
  [-24, [0, 255, 255]],
  [-32, [0, 0, 255]],
  [-40, [255, 0, 255]],
  [-48, [0, 0, 0]],
];

function lerpTable(table: Point[], at: number) {
  let i = 1;
  while (i < table.length - 1 && table[i][0] < at) i++;
  const [x0, y0] = table[i - 1];
  const [x1, y1] = table[i];
  return y0 + ((y1 - y0) * (at - x0)) / (x1 - x0);
}

function rampColor(db: number) {
  const v = Math.min(8, Math.max(-48, db));
  const i = Math.min(RAMP.length - 2, Math.floor((8 - v) / 8));
  const t = (8 - v) / 8 - i;
  const rgb = RAMP[i][1].map((c, k) => Math.round(c + (RAMP[i + 1][1][k] - c) * t));
  return `rgb(${rgb.join(',')})`;
}

const ANGLE_STEP = 3;
const ANGLES = Array.from({ length: 61 }, (_, i) => i * ANGLE_STEP);
const TABLE = POLAR.map(([hz, pts]) => ({ x: freqX(hz), db: ANGLES.map((a) => lerpTable(pts, a)) }));
const NULL_START = freqX(13000);

// slope at a table column, flat at turning points so the fit never overshoots
function slopeAt(i: number, k: number) {
  if (i === 0 || i === TABLE.length - 1) return 0;
  const [p, q, r] = [TABLE[i - 1], TABLE[i], TABLE[i + 1]];
  const a = (q.db[k] - p.db[k]) / (q.x - p.x);
  const b = (r.db[k] - q.db[k]) / (r.x - q.x);
  return a * b <= 0 ? 0 : (2 * a * b) / (a + b);
}

function columnAt(x: number) {
  let i = 1;
  while (i < TABLE.length - 1 && TABLE[i].x < x) i++;
  const a = TABLE[i - 1];
  const b = TABLE[i];
  const w = b.x - a.x;
  const t = Math.min(1, (x - a.x) / w);
  return a.db.map((v, k) => {
    if (b.x > NULL_START) return v + (b.db[k] - v) * t;
    const s = t * t * (3 - 2 * t);
    return v + (b.db[k] - v) * s + w * t * (1 - t) * ((1 - t) * slopeAt(i - 1, k) - t * slopeAt(i, k));
  });
}

// coarse steps on the smooth side, fine ones around the null at 15 kHz
const EDGES = [
  ...Array.from({ length: 190 }, (_, i) => PLOT.left + i * 4),
  ...Array.from({ length: 73 }, (_, i) => PLOT.left + 760 + i * 2),
];
const FIELD = EDGES.map(columnAt);
const MID_Y = PLOT.top + PLOT.height / 2;
const angleY = (deg: number) => (deg * PLOT.height) / 360;

function contourPath() {
  let d = '';
  for (let level = -3; level >= -36; level -= 3) {
    for (let c = 0; c < EDGES.length - 1; c++) {
      for (let r = 0; r < ANGLES.length - 1; r++) {
        const corners = [
          [EDGES[c], ANGLES[r], FIELD[c][r]],
          [EDGES[c + 1], ANGLES[r], FIELD[c + 1][r]],
          [EDGES[c + 1], ANGLES[r + 1], FIELD[c + 1][r + 1]],
          [EDGES[c], ANGLES[r + 1], FIELD[c][r + 1]],
        ];
        const hits: Point[] = [];
        corners.forEach((p, k) => {
          const q = corners[(k + 1) % 4];
          if (p[2] > level !== q[2] > level) {
            const t = (level - p[2]) / (q[2] - p[2]);
            hits.push([p[0] + (q[0] - p[0]) * t, angleY(p[1] + (q[1] - p[1]) * t)]);
          }
        });
        if (hits.length < 2) continue;
        const [[x0, y0], [x1, y1]] = hits;
        for (const side of [-1, 1]) {
          d += `M${x0.toFixed(1)} ${(MID_Y + side * y0).toFixed(1)}L${x1.toFixed(1)} ${(MID_Y + side * y1).toFixed(1)}`;
        }
      }
    }
  }
  return d;
}

const CONTOURS = contourPath();

function DirectivityMap() {
  return (
    <>
      <defs>
        {EDGES.slice(0, -1).map((x, i) => (
          <linearGradient
            key={x}
            id={`col${i}`}
            gradientUnits="userSpaceOnUse"
            x1={0}
            y1={MID_Y}
            x2={0}
            y2={PLOT.top}
            spreadMethod="reflect"
          >
            {FIELD[i].map((db, k) => (
              <stop key={k} offset={ANGLES[k] / 180} stopColor={rampColor((db + FIELD[i + 1][k]) / 2)} />
            ))}
          </linearGradient>
        ))}
        <linearGradient id="ramp" x1={0} y1={0} x2={0} y2={1}>
          {RAMP.map(([db]) => (
            <stop key={db} offset={(8 - db) / 56} stopColor={rampColor(db)} />
          ))}
        </linearGradient>
      </defs>
      <g shapeRendering="crispEdges">
        {EDGES.slice(0, -1).map((x, i) => (
          <rect key={x} x={x} y={PLOT.top} width={EDGES[i + 1] - x} height={PLOT.height} fill={`url(#col${i})`} />
        ))}
        <rect x={5} y={21} width={24} height={394} fill="url(#ramp)" />
      </g>
      <path d={CONTOURS} fill="none" stroke="#808080" strokeOpacity={0.8} />
      {RAMP.map(([db]) => (
        <text key={db} x={26} y={19.5 + ((8 - db) * 394) / 56} textAnchor="end" fill={db === -48 ? '#fff' : '#000'}>
          {db}
        </text>
      ))}
    </>
  );
}

/* ------------------------------------------------------------------ */

export default function App() {
  return (
    <div className="flex min-h-screen items-stretch bg-[#f0f0f0] font-['Liberation_Sans',Arial,sans-serif] text-[11px] leading-[14px] text-black">
      <main className="flex w-[720px] shrink-0 flex-col border-r border-[#fafafa]">
        <Header />
        <div className="flex flex-1 pl-[3px]">
          <div className="w-[700px] overflow-hidden bg-white">
            <Schematic />
          </div>
          <div className="pt-[14px] pl-[7px]">
            <div className="h-[71%] w-[2px] bg-[#868686]" />
          </div>
        </div>
        <PartEditor />
      </main>

      <aside className="ml-[12px] min-w-0 flex-1 pr-1 pb-1">
        <div className="flex h-[7px] gap-[9px] pl-[337px]">
          <div className="h-px w-[22px] bg-[#c0c0c0]" />
          <div className="h-px w-[22px] bg-[#c0c0c0]" />
        </div>
        <div className="flex flex-col gap-[6px]">
          <Graph title="SPL" rightUnit="deg" leftTicks={DB_TICKS} rightTicks={DEG_TICKS}>
            <Trace pts={PHASE} color="#8c8c8c" />
            <Trace pts={LISTENING} color="#9acd32" width={2} />
            <Trace pts={ON_AXIS} color="#606060" width={2} />
            <Trace pts={WOOFER_LOW} color="#1414c8" width={1.5} />
            <Trace pts={WOOFER} color="#00f" />
            <Trace pts={MIDRANGE} color="#0a870a" />
            <Trace pts={TWEETER} color="#f00" />
          </Graph>
          <Graph title="Power &amp; DI" rightUnit="dB" leftTicks={DB_TICKS} rightTicks={DI_TICKS}>
            <Trace pts={shift(EARLY_DI, 0, 12)} color="#fa8072" width={2} />
            <Trace pts={shift(POWER_DI, 0, 12)} color="#f00" width={2} />
            <Trace pts={shift(POWER, 0, 12)} color="#00f" width={2} />
            <Trace pts={shift(EARLY, 0, 12)} color="#0ff" width={2} />
            <Trace pts={shift(IN_ROOM, 0, 12)} color="#ff8c00" width={2} />
            <Trace pts={LISTENING} color="#9acd32" width={2} />
            <Trace pts={ON_AXIS} color="#606060" width={2} />
          </Graph>
          <Graph title="Directivity (hor)" rightUnit="deg" rightTicks={DEG_TICKS} overlay before={<DirectivityMap />} />
        </div>
      </aside>
    </div>
  );
}
